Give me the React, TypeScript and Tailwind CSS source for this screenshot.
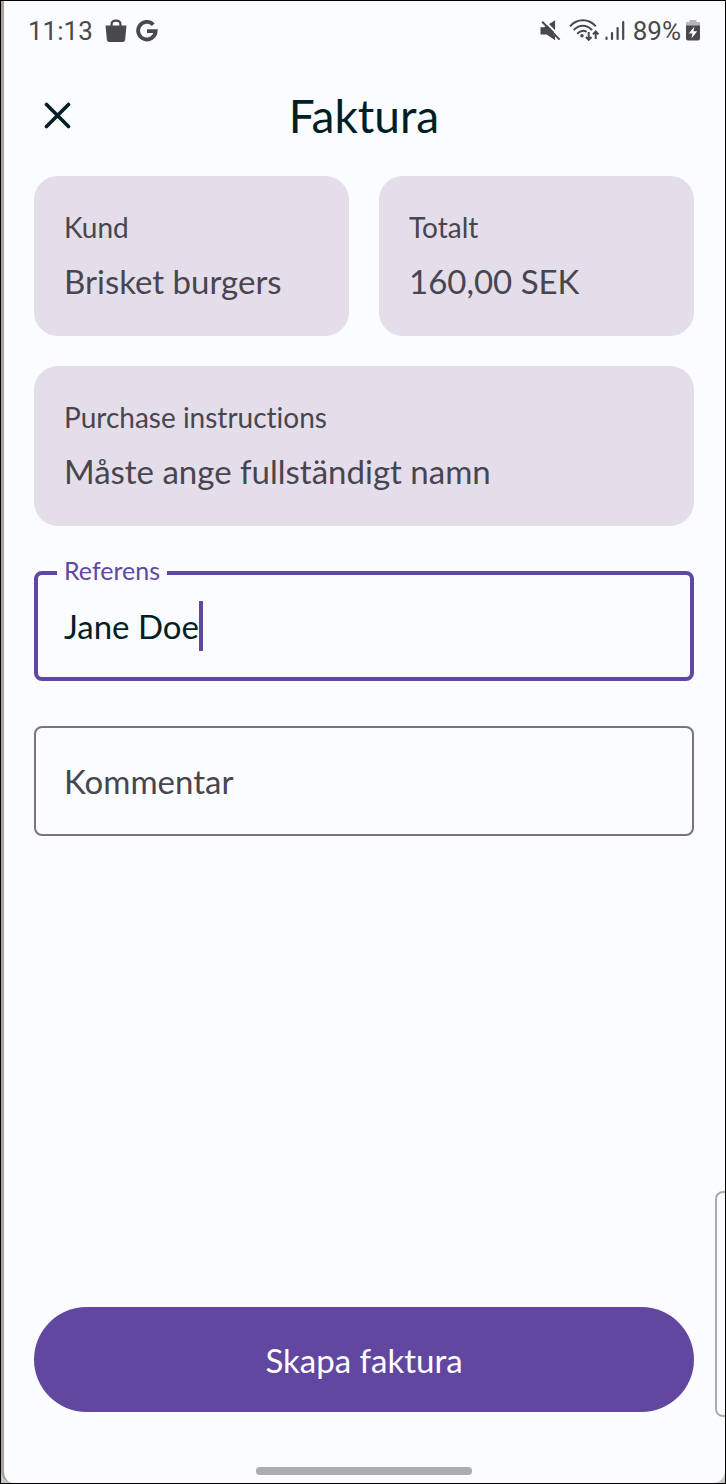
import { useState } from 'react';

function BagIcon() {
  return (
    <svg className="w-6 h-6" viewBox="0 0 24 24" fill="none" aria-hidden="true">
      <path d="M1.5 6.5h21L21.2 20.2a3 3 0 0 1-3 2.8H5.8a3 3 0 0 1-3-2.8z" fill="currentColor" />
      <path d="M7.6 8V5.2C7.6 3 9.4 1.7 12 1.7s4.4 1.3 4.4 3.5V8" stroke="currentColor" strokeWidth="2.2" />
    </svg>
  );
}

function GoogleIcon() {
  return (
    <svg className="w-6 h-6" viewBox="0 0 24 24" fill="none" stroke="currentColor" strokeWidth="3.8" aria-hidden="true">
      <path d="M18.3 5.6A8.8 8.8 0 1 0 20.7 12.2H12" />
    </svg>
  );
}

function MuteIcon() {
  return (
    <svg className="mr-0.5 w-6 h-6" viewBox="0 0 24 24" fill="none" aria-hidden="true">
      <path d="M2.5 8.2h3.6l11-7v10.9l-2.2 3.2 2.2 2v3.9l-8.4-5.6H2.5z" fill="currentColor" />
      <path d="M5.8 1.2 23.3 18.9" stroke="#fbfcff" strokeWidth="2" />
      <path d="M4.2 2.8 21.6 20.6" stroke="currentColor" strokeWidth="2" />
    </svg>
  );
}

function WifiIcon() {
  return (
    <svg className="mr-px w-8 h-6" viewBox="0 0 32 24" fill="none" stroke="currentColor" strokeWidth="2" aria-hidden="true">
      <path d="M2 7.3C9.2-.7 20.6-.7 27.8 7.3" />
      <path d="M5.6 11.2C11 5.2 18.8 5.2 24.1 11.2" />
      <path d="M9.2 14.8C12.2 11.4 16.2 11.2 18.6 13" />
      <circle cx="14" cy="16.8" r="1.8" fill="currentColor" stroke="none" />
      <path d="M20.7 13v8M17.9 18l2.8 2.9 2.8-2.9M27.7 20v-7.5M24.9 15.4l2.8-2.9 2.8 2.9" />
    </svg>
  );
}

function SignalIcon() {
  return (
    <svg className="w-5 h-6" viewBox="0 0 20 24" fill="none" stroke="currentColor" strokeWidth="2.2" strokeLinecap="round" aria-hidden="true">
      <path d="M1.5 18.6V20M7 14v6M12.6 9v11M18.2 3v17" />
    </svg>
  );
}

function BatteryIcon() {
  return (
    <svg className="w-4 h-6" viewBox="0 0 16 24" aria-hidden="true">
      <path d="M4.5 1h7v2H15v4H1V3h3.5z" fill="#b6b7b9" />
      <path d="M1 6.5h14v13a2 2 0 0 1-2 2H3a2 2 0 0 1-2-2z" fill="currentColor" />
      <path d="m9.4 7.4-5.6 7.2h3.6l-.9 4.9 5.7-7.3H8.5z" fill="#fbfcff" />
    </svg>
  );
}

function InfoCard({ label, value }: { label: string; value: string }) {
  return (
    <div className="flex-1 rounded-3xl bg-[#e4deea] px-[30px] pt-[31px] pb-[33px] text-[#49454f]">
      <div className="text-[28px] leading-10">{label}</div>
      <div className="mt-3 text-[33px] leading-11">{value}</div>
    </div>
  );
}

export default function App() {
  const [reference, setReference] = useState('Jane Doe');
  const [comment, setComment] = useState('');

  return (
    <div className="min-h-screen flex bg-[#c9c7c8] border border-black font-['Lato',sans-serif] [font-variant-ligatures:none]">
      <div className="relative flex-1 flex flex-col overflow-hidden rounded-b-xl border-l-3 border-[#aaa3a2] bg-[#fbfcff] pl-[30px] pr-[31px]">
        <div className="-ml-[6px] -mr-[7px] flex h-15 items-center justify-between text-[#49494b]">
          <div className="flex items-center gap-[7px]">
            <span className="mr-1 font-['Roboto',sans-serif] text-[26px] leading-8">11:13</span>
            <BagIcon />
            <GoogleIcon />
          </div>
          <div className="flex items-center gap-1">
            <MuteIcon />
            <WifiIcon />
            <SignalIcon />
            <span className="ml-1 font-['Roboto',sans-serif] text-[26px] leading-8">89%</span>
            <BatteryIcon />
          </div>
        </div>

        <header className="mt-[23px] grid grid-cols-[48px_1fr_48px] items-center text-[#001f25]">
          <button type="button" aria-label="Stäng" className="flex h-12 w-12 items-center justify-center">
            <svg className="w-7 h-7" viewBox="0 0 28 28" fill="none" stroke="currentColor" strokeWidth="3.6" strokeLinecap="round" aria-hidden="true">
              <path d="M2.5 2.5l22 22M24.5 2.5l-22 22" />
            </svg>
          </button>
          <h1 className="text-center text-[46px] leading-16">Faktura</h1>
        </header>

        <main className="mt-7 flex flex-1 flex-col">
          <div className="flex gap-[30px]">
            <InfoCard label="Kund" value="Brisket burgers" />
            <InfoCard label="Totalt" value="160,00 SEK" />
          </div>
          <div className="mt-[30px] flex">
            <InfoCard label="Purchase instructions" value="Måste ange fullständigt namn" />
          </div>

          <div className="relative mt-[45px] flex h-[110px] items-center rounded-lg border-4 border-[#6247a1] px-[26px]">
            <label
              htmlFor="reference"
              className="absolute -top-[21px] left-[19px] bg-[#fbfcff] px-[7px] text-[25px] leading-8 text-[#6247a1]"
            >
              Referens
            </label>
            <input
              id="reference"
              type="text"
              value={reference}
              onChange={(e) => setReference(e.target.value)}
              className="field-sizing-content max-w-full bg-transparent text-[33px] leading-11 text-[#001f25] caret-transparent outline-none"
            />
            <span className="h-[50px] w-1 shrink-0 bg-[#6247a1]" />
          </div>

          <input
            type="text"
            aria-label="Kommentar"
            placeholder="Kommentar"
            value={comment}
            onChange={(e) => setComment(e.target.value)}
            className="mt-[45px] h-[110px] w-full rounded-lg border-2 border-[#79747e] bg-transparent px-7 text-[33px] leading-11 text-[#001f25] outline-none placeholder:text-[#49454f]"
          />

          <button
            type="button"
            className="mt-auto h-[105px] w-full rounded-full bg-[#6247a1] text-[33px] leading-11 text-white"
          >
            Skapa faktura
          </button>
        </main>

        <div className="mx-auto mt-[55px] mb-2 h-2 w-[216px] rounded-full bg-[#abacae]" />

        {/* edge panel handle */}
        <div className="absolute right-0 bottom-[66px] h-[226px] w-[10px] rounded-l-lg border-2 border-r-0 border-[#abacae] bg-[#fbfcff]" />
      </div>
    </div>
  );
}
